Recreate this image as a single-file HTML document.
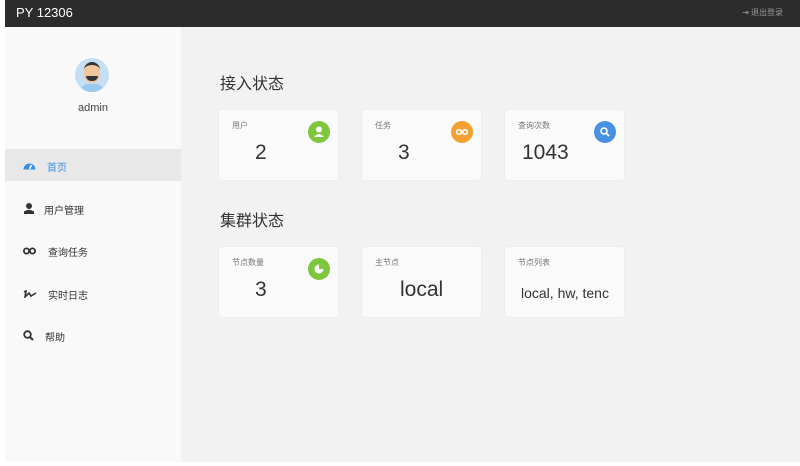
<!DOCTYPE html><html><head><meta charset="utf-8"><style>
body{margin:0;width:800px;height:466px;background:#fff;font-family:"Liberation Sans","Noto Sans CJK SC",sans-serif;position:relative;overflow:hidden}
.hd{position:absolute;left:5px;top:0;width:795px;height:27px;background:#2c2c2c;color:#fff}
.hd .t{position:absolute;left:11px;top:5px;font-size:13px}
.hd .r{position:absolute;right:17px;top:7px;font-size:8px;color:#999}
.sb{position:absolute;left:5px;top:27px;width:176px;height:435px;background:#f9f9f9}
.main{position:absolute;left:181px;top:27px;width:619px;height:435px;background:#f2f2f2}
.av{position:absolute;left:75px;top:58px;width:34px;height:34px;border-radius:50%;background:#c5def3;overflow:hidden}
.adm{position:absolute;left:5px;width:176px;top:102px;text-align:center;font-size:11px;color:#444}
.mi{position:absolute;left:5px;width:176px;height:32px;font-size:10px;color:#333}
.mi span{position:absolute;top:10px}
.mi svg{position:absolute;left:18px;top:11px}
.h{position:absolute;left:220px;font-size:16px;color:#333}
.c{position:absolute;width:119px;height:70px;background:#fafafa;border-radius:3px;box-shadow:0 0 2px rgba(0,0,0,.05)}
.c .l{position:absolute;left:13px;top:10px;font-size:8px;color:#777}
.c .v{position:absolute;top:31px;font-size:21px;color:#333}
.c .i{position:absolute;right:8px;top:11px;width:22px;height:22px;border-radius:50%}
</style></head><body>
<div class="hd"><div class="t">PY 12306</div><div class="r">⇥ 退出登录</div></div>
<div class="sb"></div><div class="main"></div>
<div class="av"><div style="position:absolute;left:9px;top:4px;width:16px;height:18px;border-radius:8px;background:#f0c79a;border-top:3px solid #333"></div><div style="position:absolute;left:11px;top:18px;width:12px;height:5px;background:#333;border-radius:0 0 6px 6px"></div><div style="position:absolute;left:5px;top:26px;width:24px;height:10px;background:#9ec9ef;border-radius:8px 8px 0 0"></div></div>
<div class="adm">admin</div>
<div class="mi" style="top:149px;background:#e8e8e8;color:#3a8ee6"><svg width="13" height="10" viewBox="0 0 13 10"><path d="M0.5 9.5A6 6 0 0 1 12.5 9.5Z" fill="#3a8ee6"/><path d="M6.5 9L8.5 5" stroke="#fff" stroke-width="1.5"/></svg><span style="left:42px">首页</span></div>
<div class="mi" style="top:192px"><svg width="12" height="11" viewBox="0 0 12 11"><circle cx="6" cy="3" r="3" fill="#333"/><path d="M1 11V8.5Q6 5 11 8.5V11Z" fill="#333"/></svg><span style="left:39px">用户管理</span></div>
<div class="mi" style="top:234px"><svg width="13" height="8" viewBox="0 0 13 8" style="top:13px"><circle cx="3.5" cy="4" r="2.6" fill="none" stroke="#333" stroke-width="1.8"/><circle cx="9.5" cy="4" r="2.6" fill="none" stroke="#333" stroke-width="1.8"/></svg><span style="left:43px">查询任务</span></div>
<div class="mi" style="top:277px"><svg width="14" height="8" viewBox="0 0 14 8" style="top:13px"><path d="M1 2L3 1L2 7L6 3L8 6L13 3" fill="none" stroke="#333" stroke-width="1.6"/></svg><span style="left:43px">实时日志</span></div>
<div class="mi" style="top:319px"><svg width="11" height="11" viewBox="0 0 11 11"><circle cx="4.5" cy="4.5" r="3.3" fill="none" stroke="#333" stroke-width="1.8"/><path d="M7 7L10 10" stroke="#333" stroke-width="2"/></svg><span style="left:40px">帮助</span></div>
<div class="h" style="top:70px">接入状态</div>
<div class="h" style="top:207px">集群状态</div>
<div class="c" style="left:219px;top:110px"><div class="l">用户</div><div class="v" style="left:36px">2</div><div class="i" style="background:#7dc63e"><svg width="22" height="22"><circle cx="11" cy="8.5" r="3" fill="#fff"/><path d="M6 16Q11 10 16 16Z" fill="#fff"/></svg></div></div>
<div class="c" style="left:362px;top:110px"><div class="l">任务</div><div class="v" style="left:36px">3</div><div class="i" style="background:#f2a031"><svg width="22" height="22"><circle cx="8" cy="11" r="2.3" fill="none" stroke="#fff" stroke-width="1.6"/><circle cx="14" cy="11" r="2.3" fill="none" stroke="#fff" stroke-width="1.6"/></svg></div></div>
<div class="c" style="left:505px;top:110px"><div class="l">查询次数</div><div class="v" style="left:17px">1043</div><div class="i" style="background:#4a90e2"><svg width="22" height="22"><circle cx="10" cy="10" r="3" fill="none" stroke="#fff" stroke-width="1.6"/><path d="M12 12L15 15" stroke="#fff" stroke-width="1.8"/></svg></div></div>
<div class="c" style="left:219px;top:247px"><div class="l">节点数量</div><div class="v" style="left:36px">3</div><div class="i" style="background:#7dc63e"><svg width="22" height="22"><circle cx="11" cy="11" r="4.5" fill="#fff"/><path d="M11 11L11 6.5A4.5 4.5 0 0 1 15.5 11Z" fill="#7dc63e"/></svg></div></div>
<div class="c" style="left:362px;top:247px"><div class="l">主节点</div><div class="v" style="left:38px">local</div></div>
<div class="c" style="left:505px;top:247px"><div class="l">节点列表</div><div class="v" style="left:16px;top:38px;font-size:14px">local, hw, tenc</div></div>
</body></html>
